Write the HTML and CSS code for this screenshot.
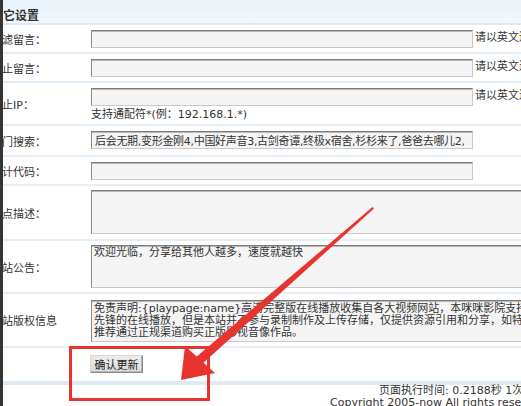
FILE: index.html
```html
<!DOCTYPE html>
<html lang="zh-CN">
<head>
<meta charset="utf-8">
<title>其它设置</title>
<link rel="stylesheet" href="styles.css">
</head>
<body>
<div class="frame">
  <div class="panel">
    <div class="head">其它设置</div>
    <div class="row r1">
      <div class="label">过滤留言：</div>
      <div class="field"><div class="line"><input class="txt" type="text" value=""><span class="hint">请以英文逗号分隔</span></div></div>
    </div>
    <div class="row r2">
      <div class="label">禁止留言：</div>
      <div class="field"><div class="line"><input class="txt" type="text" value=""><span class="hint">请以英文逗号分隔</span></div></div>
    </div>
    <div class="row r3">
      <div class="label">禁止IP：</div>
      <div class="field"><div class="line"><input class="txt" type="text" value=""><span class="hint">请以英文逗号分隔</span></div>
        <div class="tip">支持通配符*(例：192.168.1.*)</div></div>
    </div>
    <div class="row r4">
      <div class="label">热门搜索：</div>
      <div class="field"><div class="line"><input class="txt tight" type="text" value="后会无期,变形金刚4,中国好声音3,古剑奇谭,终极x宿舍,杉杉来了,爸爸去哪儿2,"></div></div>
    </div>
    <div class="row r5">
      <div class="label">统计代码：</div>
      <div class="field"><div class="line"><input class="txt" type="text" value=""></div></div>
    </div>
    <div class="row r6">
      <div class="label">站点描述：</div>
      <div class="field"><textarea class="area a6" wrap="off"></textarea></div>
    </div>
    <div class="row r7">
      <div class="label">网站公告：</div>
      <div class="field"><textarea class="area a7" wrap="off">欢迎光临，分享给其他人越多，速度就越快</textarea></div>
    </div>
    <div class="row r8">
      <div class="label">网站版权信息</div>
      <div class="field"><textarea class="area a8" wrap="off">免责声明:{playpage:name}高清完整版在线播放收集自各大视频网站，本咪咪影院支持西瓜影音
先锋的在线播放，但是本站并不参与录制制作及上传存储，仅提供资源引用和分享，如特别喜欢
推荐通过正规渠道购买正版影视音像作品。</textarea></div>
    </div>
    <div class="row r9">
      <div class="label"></div>
      <div class="field"><button class="btn" type="button">确认更新</button></div>
    </div>
  </div>
  <div class="band"></div>
  <div class="footer">
    <div class="f1">页面执行时间: 0.2188秒 1次数据查询</div>
    <div class="f2">Copyright 2005-now All rights reserved</div>
  </div>
</div>
<svg class="mark" width="521" height="406" viewBox="0 0 521 406">
  <rect x="70.5" y="347.5" width="138" height="52" fill="none" stroke="#e8342f" stroke-width="3"/>
  <polygon points="372.5,207 374,208.5 201,365 195,358" fill="#e8342f"/>
  <polygon points="181,380 185,346 215,373" fill="#e8342f"/>
</svg>
</body>
</html>
```
FILE: styles.css
```css
html, body {
  margin: 0;
  padding: 0;
  background: #ffffff;
}
body {
  position: relative;
  width: 521px;
  height: 406px;
  overflow: hidden;
  font-family: "DejaVu Sans", "Noto Sans CJK SC", sans-serif;
  font-size: 11px;
  color: #333333;
}
.frame {
  border-left: 3px solid #353535;
  height: 406px;
  overflow: hidden;
}
.panel {
  margin-left: -13px;
  width: 620px;
}
.head {
  height: 25px;
  box-sizing: border-box;
  padding: 7px 0 0 1px;
  line-height: 18px;
  font-size: 12px;
  font-weight: bold;
  color: #333333;
  background: linear-gradient(#e8f2f9, #f3f8fc);
  border-bottom: 2px solid #dfebf4;
}
.row {
  display: flex;
  border-bottom: 2px solid #e3eef6;
  background: #ffffff;
}
.label {
  width: 101px;
  flex: none;
  box-sizing: border-box;
  padding-left: 1px;
  display: flex;
  align-items: center;
  white-space: nowrap;
}
.field {
  flex: 1;
  display: flex;
  flex-direction: column;
}
.line {
  display: flex;
  align-items: flex-start;
}
.txt {
  width: 382px;
  height: 18px;
  box-sizing: border-box;
  margin: 0;
  padding: 1px 3px;
  font: inherit;
  color: #333333;
  background: #f4f4f4;
  border: 1px solid;
  border-color: #7c7c7c #cacaca #cacaca #8a8a8a;
  box-shadow: inset 0 1px 0 #b8b8b8;
  outline: none;
}
.tight {
  letter-spacing: -0.3px;
}
.hint {
  margin-left: 2px;
  line-height: 15px;
  white-space: nowrap;
}
.tip {
  padding-top: 2px;
  line-height: 14px;
  white-space: nowrap;
}
.area {
  width: 440px;
  box-sizing: border-box;
  margin: 0;
  padding: 1px 2px;
  font: inherit;
  line-height: 12px;
  color: #333333;
  background: #f4f4f4;
  border: 1px solid;
  border-color: #7c7c7c #cacaca #cacaca #8a8a8a;
  box-shadow: inset 0 1px 0 #b8b8b8;
  resize: none;
  overflow: hidden;
  white-space: pre;
  outline: none;
}
.r1 .field, .r2 .field, .r5 .field { padding: 5px 0 4px; }
.r3 .field { padding: 5px 0 2px; }
.r4 .field { padding: 5px 0 6px; }
.r6 .field { padding: 4px 0 5px; }
.r7 .field { padding: 4px 0 4px; }
.r8 .field { padding: 6px 0 4px; }
.r9 { border-bottom: none; }
.r9 .field { padding: 7px 0 8px; }
.a6 { height: 44px; }
.a7 { height: 43px; }
.a8 { height: 42px; padding-top: 2px; }
.btn {
  align-self: flex-start;
  margin-left: -1px;
  height: 18px;
  width: 53px;
  padding: 0;
  font: inherit;
  color: #222222;
  background: linear-gradient(#ececec, #dcdcdc);
  border: 1px solid;
  border-color: #d8d8d8 #8c8c8c #8c8c8c #d8d8d8;
  box-shadow: inset -1px -1px 0 #b4b4b4;
}
.band {
  height: 4px;
  background: #dfeaf3;
}
.footer {
  line-height: 12px;
  white-space: nowrap;
  color: #333333;
}
.f1 { margin-left: 376px; }
.f2 { margin-left: 327px; }
.mark {
  position: absolute;
  left: 0;
  top: 0;
}
```
